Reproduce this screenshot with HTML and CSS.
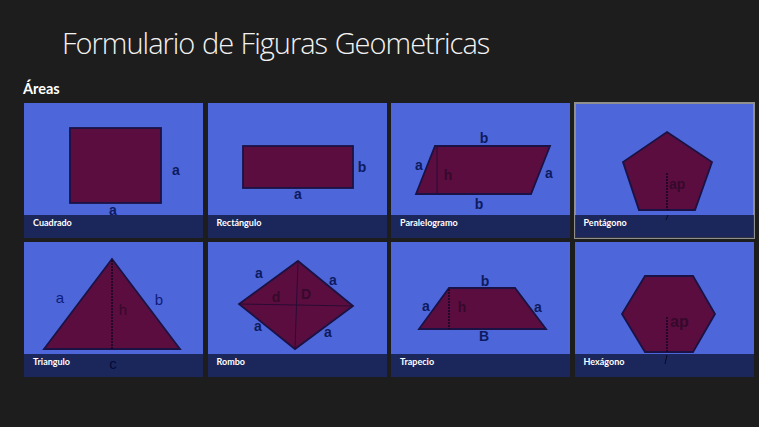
FILE: index.html
```html
<!DOCTYPE html>
<html lang="es">
<head>
<meta charset="utf-8">
<title>Formulario de Figuras Geometricas</title>
<link rel="stylesheet" href="styles.css">
</head>
<body>
<header class="page-header">
  <h1 class="page-title">Formulario de Figuras Geometricas</h1>
</header>
<section class="group">
  <h2 class="group-title">Áreas</h2>
  <div class="grid">
    <div class="tile">
      <svg class="art" viewBox="0 0 179 135" width="179" height="135">
        <rect class="shape" x="46" y="25" width="91" height="75"/>
        <text class="lbl" x="152" y="72">a</text>
        <text class="lbl" x="89" y="112">a</text>
      </svg>
      <div class="caption">Cuadrado</div>
    </div>
    <div class="tile">
      <svg class="art" viewBox="0 0 179 135" width="179" height="135">
        <rect class="shape" x="35" y="43" width="110" height="42"/>
        <text class="lbl" x="154" y="69">b</text>
        <text class="lbl" x="90" y="96">a</text>
      </svg>
      <div class="caption">Rectángulo</div>
    </div>
    <div class="tile">
      <svg class="art" viewBox="0 0 179 135" width="179" height="135">
        <polygon class="shape" points="44,43 159,43 140,91 25,91"/>
        <line class="hline" x1="46" y1="44" x2="46" y2="90"/>
        <text class="lbl" x="93" y="40">b</text>
        <text class="lbl" x="28" y="67">a</text>
        <text class="lbl inner" x="57" y="77">h</text>
        <text class="lbl" x="158" y="75">a</text>
        <text class="lbl" x="88" y="106">b</text>
      </svg>
      <div class="caption">Paralelogramo</div>
    </div>
    <div class="tile selected">
      <svg class="art" viewBox="0 0 179 135" width="179" height="135">
        <polygon class="shape" points="92,29 137,59 120,107 64,107 48,59"/>
        <line class="dash" x1="92" y1="70" x2="92" y2="107"/>
        <line class="tick" x1="93" y1="112" x2="91" y2="117"/>
        <text class="lbl inner start" x="94" y="86">ap</text>
      </svg>
      <div class="caption">Pentágono</div>
    </div>
    <div class="tile">
      <svg class="art" viewBox="0 0 179 135" width="179" height="135">
        <polygon class="shape" points="88,17 156,107 20,107"/>
        <line class="dash" x1="88" y1="18" x2="88" y2="107"/>
        <text class="lbl thin" x="36" y="61">a</text>
        <text class="lbl thin" x="135" y="63">b</text>
        <text class="lbl thin inner" x="99" y="73">h</text>
        <text class="lbl thin" x="89" y="127">c</text>
      </svg>
      <div class="caption">Triangulo</div>
    </div>
    <div class="tile">
      <svg class="art" viewBox="0 0 179 135" width="179" height="135">
        <polygon class="shape" points="90,19 145,64 87,107 31,62"/>
        <line class="hline" x1="90" y1="19" x2="87" y2="107"/>
        <line class="hline" x1="31" y1="62" x2="145" y2="64"/>
        <text class="lbl" x="51" y="36">a</text>
        <text class="lbl" x="125" y="43">a</text>
        <text class="lbl inner" x="68" y="60">d</text>
        <text class="lbl inner" x="98" y="57">D</text>
        <text class="lbl" x="50" y="89">a</text>
        <text class="lbl" x="120" y="95">a</text>
      </svg>
      <div class="caption">Rombo</div>
    </div>
    <div class="tile">
      <svg class="art" viewBox="0 0 179 135" width="179" height="135">
        <polygon class="shape" points="58,46 124,46 155,87 28,87"/>
        <line class="dash" x1="58" y1="47" x2="58" y2="87"/>
        <text class="lbl" x="94" y="44">b</text>
        <text class="lbl" x="35" y="69">a</text>
        <text class="lbl inner" x="71" y="70">h</text>
        <text class="lbl" x="147" y="70">a</text>
        <text class="lbl" x="93" y="99">B</text>
      </svg>
      <div class="caption">Trapecio</div>
    </div>
    <div class="tile">
      <svg class="art" viewBox="0 0 179 135" width="179" height="135">
        <polygon class="shape" points="70,34 118,34 140,72 118,110 70,110 47,72"/>
        <line class="dash" x1="92" y1="75" x2="92" y2="110"/>
        <line class="tick" x1="92" y1="113" x2="90" y2="122"/>
        <text class="lbl inner start big" x="95" y="85">ap</text>
      </svg>
      <div class="caption">Hexágono</div>
    </div>
  </div>
</section>
</body>
</html>
```

FILE: styles.css
```css
html, body {
  margin: 0;
  padding: 0;
}
body {
  background: #1d1d1d;
  color: #ffffff;
  font-family: "Open Sans", "Noto Sans", "DejaVu Sans", sans-serif;
  width: 759px;
  height: 427px;
  overflow: hidden;
}
.page-header {
  padding: 24px 0 0 62px;
  box-sizing: border-box;
  height: 78px;
}
.page-title {
  margin: 0;
  font-size: 29px;
  line-height: 38px;
  font-weight: 300;
  color: #f2f2f2;
  letter-spacing: -1px;
  word-spacing: 1px;
}
.group {
  padding-left: 24px;
}
.group-title {
  margin: 0 0 3px -1px;
  font-family: Lato, "Open Sans", sans-serif;
  font-size: 14.5px;
  line-height: 22px;
  font-weight: 700;
  color: #ffffff;
}
.grid {
  display: grid;
  grid-template-columns: repeat(4, 179px);
  grid-auto-rows: 135px;
  column-gap: 4.5px;
  row-gap: 4px;
}
.tile {
  position: relative;
  background: #4d66d9;
  overflow: hidden;
}
.tile.selected {
  outline: 2px solid #8f8f8f;
  outline-offset: -1px;
}
.art {
  display: block;
}
.shape {
  fill: #5c0d3f;
  stroke: #1a1245;
  stroke-width: 1.8;
  stroke-linejoin: miter;
}
.hline {
  stroke: #2a0b35;
  stroke-width: 1;
}
.dash {
  stroke: #1e0628;
  stroke-width: 1.8;
  stroke-dasharray: 2 1;
}
.tick {
  stroke: #1a1440;
  stroke-width: 1;
}
.lbl {
  font-family: "Liberation Sans", Arial, sans-serif;
  font-weight: 700;
  font-size: 14px;
  fill: #0e1a5e;
  text-anchor: middle;
}
.lbl.thin {
  font-weight: 400;
  font-size: 15px;
  fill: #0f1c78;
}
.lbl.inner {
  fill: #36092c;
}
.lbl.start {
  text-anchor: start;
  font-size: 14px;
}
.lbl.big {
  font-size: 16px;
}
.caption {
  position: absolute;
  left: 0;
  right: 0;
  bottom: 0;
  height: 23px;
  background: rgba(0, 2, 20, 0.64);
  font-family: Lato, "Open Sans", sans-serif;
  font-size: 9px;
  font-weight: 700;
  line-height: 16px;
  padding-left: 9px;
  color: #ffffff;
}
```
